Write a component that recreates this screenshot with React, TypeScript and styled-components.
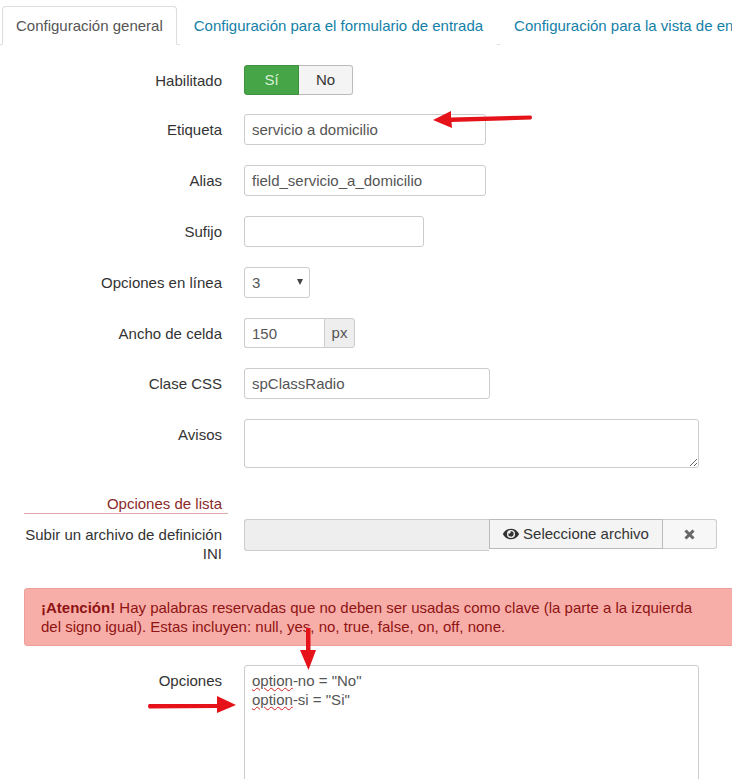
import React, { FC } from "react";
import styled, { createGlobalStyle } from "styled-components";
import { FaEye } from "react-icons/fa";

const GlobalStyle = createGlobalStyle`
  html, body {
    margin: 0;
    padding: 0;
    background: #fff;
    overflow: hidden;
  }
  body {
    font-family: "Liberation Sans", Arial, sans-serif;
    font-size: 15px;
    line-height: 20px;
    color: #333;
  }
`;

const Page = styled.div`
  position: relative;
  width: 732px;
  height: 779px;
  overflow: hidden;
`;

const Tabs = styled.ul`
  display: flex;
  box-sizing: border-box;
  margin: 0;
  padding: 6px 0 0 2px;
  height: 45px;
  list-style: none;
  border-bottom: 1px solid #ddd;
  white-space: nowrap;
`;

const Tab = styled.li<{ $active?: boolean }>`
  flex: none;
  height: 39px;
  box-sizing: border-box;
  padding: 9px 13px 0;
  margin-right: 3px;
  border: 1px solid ${(p) => (p.$active ? "#ddd" : "transparent")};
  border-bottom: ${(p) => (p.$active ? "1px solid #fff" : "none")};
  border-radius: 4px 4px 0 0;
  color: ${(p) => (p.$active ? "#555" : "#1480a8")};
  background: #fff;
`;

const Form = styled.div`
  padding: 20px 0 0 24px;
`;

const Row = styled.div<{ $gap?: number }>`
  display: grid;
  grid-template-columns: 198px 1fr;
  column-gap: 22px;
  margin-bottom: ${(p) => p.$gap ?? 20}px;
`;

const Label = styled.label`
  text-align: right;
  padding-top: 6px;
  line-height: 19px;
  color: #333;
`;

const Toggle = styled.div`
  display: flex;
  width: 109px;
  height: 30px;
`;

const ToggleButton = styled.div<{ $on?: boolean }>`
  box-sizing: border-box;
  height: 30px;
  width: ${(p) => (p.$on ? 55 : 54)}px;
  text-align: center;
  line-height: 28px;
  background: ${(p) => (p.$on ? "#46a546" : "#f4f4f4")};
  color: ${(p) => (p.$on ? "#d8f0d8" : "#333")};
  border: 1px solid ${(p) => (p.$on ? "#3d8f3d" : "#bbb")};
  border-left-width: ${(p) => (p.$on ? 1 : 0)}px;
  border-radius: ${(p) => (p.$on ? "3px 0 0 3px" : "0 3px 3px 0")};
`;

const TextInput = styled.input<{ $width: number }>`
  display: block;
  box-sizing: border-box;
  width: ${(p) => p.$width}px;
  height: 31px;
  padding: 0 7px;
  border: 1px solid #ccc;
  border-radius: 3px;
  font: inherit;
  color: #555;
  background: #fff;
  outline: none;
`;

const SelectWrap = styled.div`
  position: relative;
  width: 66px;
  &::after {
    content: "";
    position: absolute;
    top: 12px;
    right: 7px;
    border-left: 3px solid transparent;
    border-right: 3px solid transparent;
    border-top: 6px solid #444;
  }
`;

const Select = styled.select`
  display: block;
  box-sizing: border-box;
  width: 66px;
  height: 31px;
  padding: 0 7px;
  border: 1px solid #ccc;
  border-radius: 3px;
  font: inherit;
  color: #555;
  background: #fff;
  appearance: none;
`;

const AddOnGroup = styled.div`
  display: flex;
  height: 30px;
`;

const AddOnInput = styled(TextInput)`
  height: 30px;
  border-right: none;
  border-radius: 3px 0 0 3px;
`;

const AddOn = styled.span`
  box-sizing: border-box;
  width: 31px;
  height: 30px;
  line-height: 28px;
  text-align: center;
  background: #eee;
  border: 1px solid #ccc;
  border-radius: 0 3px 3px 0;
  color: #555;
`;

const Area = styled.textarea`
  display: block;
  box-sizing: border-box;
  width: 455px;
  height: 49px;
  border: 1px solid #ccc;
  border-radius: 3px;
  background: #fff;
  outline: none;
`;

const SectionTitle = styled.div`
  box-sizing: border-box;
  width: 204px;
  height: 20px;
  padding-right: 6px;
  margin: 0 0 5px;
  text-align: right;
  line-height: 19px;
  color: #8a2a2a;
  border-bottom: 1px solid #e0a8a8;
`;

const FileGroup = styled.div`
  display: flex;
  align-items: flex-start;
`;

const FileName = styled.div`
  box-sizing: border-box;
  width: 245px;
  height: 32px;
  background: #eee;
  border: 1px solid #ccc;
  border-right: none;
  border-radius: 3px 0 0 3px;
`;

const FileButton = styled.div`
  display: flex;
  align-items: center;
  justify-content: center;
  gap: 4px;
  box-sizing: border-box;
  width: 174px;
  height: 30px;
  background: #f4f4f4;
  border: 1px solid #bbb;
  color: #333;
  svg {
    font-size: 16px;
  }
`;

const ClearButton = styled.div`
  display: flex;
  align-items: center;
  justify-content: center;
  box-sizing: border-box;
  width: 54px;
  height: 30px;
  background: #f7f7f7;
  border: 1px solid #ccc;
  border-left: none;
  border-radius: 0 3px 3px 0;
  color: #666;
`;

const Alert = styled.div`
  box-sizing: border-box;
  width: 760px;
  height: 58px;
  padding: 9px 16px;
  margin: 25px 0 19px;
  background: #f7aea8;
  border: 1px solid #ef9f9a;
  border-radius: 3px;
  color: #8f1313;
  line-height: 19px;
  white-space: nowrap;
`;

const OptionsBox = styled.div`
  box-sizing: border-box;
  width: 455px;
  height: 200px;
  padding: 5px 7px;
  border: 1px solid #ccc;
  border-radius: 3px;
  line-height: 19px;
  color: #555;
`;

const Misspelled = styled.span`
  text-decoration: underline wavy #d02020 1px;
`;

const Annotations = styled.svg`
  position: absolute;
  top: 0;
  left: 0;
  pointer-events: none;
`;

const CancelIcon: FC = () => (
  <svg width="11" height="11" viewBox="0 0 11 11">
    <path d="M1.5 1.5 L9.5 9.5 M9.5 1.5 L1.5 9.5" stroke="currentColor" strokeWidth="3" fill="none" />
  </svg>
);

const App: FC = () => {
  return (
    <Page>
      <GlobalStyle />
      <Tabs>
        <Tab $active>Configuración general</Tab>
        <Tab>Configuración para el formulario de entrada</Tab>
        <Tab>Configuración para la vista de entrada</Tab>
      </Tabs>
      <Form>
        <Row $gap={19}>
          <Label>Habilitado</Label>
          <Toggle>
            <ToggleButton $on>Sí</ToggleButton>
            <ToggleButton>No</ToggleButton>
          </Toggle>
        </Row>
        <Row>
          <Label>Etiqueta</Label>
          <TextInput $width={242} defaultValue="servicio a domicilio" />
        </Row>
        <Row>
          <Label>Alias</Label>
          <TextInput $width={242} defaultValue="field_servicio_a_domicilio" />
        </Row>
        <Row>
          <Label>Sufijo</Label>
          <TextInput $width={180} />
        </Row>
        <Row>
          <Label>Opciones en línea</Label>
          <SelectWrap>
            <Select defaultValue="3">
              <option>3</option>
            </Select>
          </SelectWrap>
        </Row>
        <Row>
          <Label>Ancho de celda</Label>
          <AddOnGroup>
            <AddOnInput $width={80} defaultValue="150" />
            <AddOn>px</AddOn>
          </AddOnGroup>
        </Row>
        <Row>
          <Label>Clase CSS</Label>
          <TextInput $width={246} defaultValue="spClassRadio" />
        </Row>
        <Row $gap={26}>
          <Label>Avisos</Label>
          <Area />
        </Row>
        <SectionTitle>Opciones de lista</SectionTitle>
        <Row $gap={0}>
          <Label>Subir un archivo de definición INI</Label>
          <FileGroup>
            <FileName />
            <FileButton>
              <FaEye />
              Seleccione archivo
            </FileButton>
            <ClearButton>
              <CancelIcon />
            </ClearButton>
          </FileGroup>
        </Row>
        <Alert>
          <strong>¡Atención!</strong> Hay palabras reservadas que no deben ser usadas como clave (la parte a la izquierda
          <br />
          del signo igual). Estas incluyen: null, yes, no, true, false, on, off, none.
        </Alert>
        <Row>
          <Label>Opciones</Label>
          <OptionsBox>
            <Misspelled>option</Misspelled>-no = "No"
            <br />
            <Misspelled>option</Misspelled>-si = "Si"
          </OptionsBox>
        </Row>
      </Form>
      <Annotations width="732" height="779" viewBox="0 0 732 779">
        <g fill="#e5121a" stroke="none">
          <path d="M531 115.5 Q533 117.5 531 119.5 L451.5 122 L452 128 L433 120 L451 111 L451 117.5 Z" />
          <path d="M306 628 L306 650 L300 650 L308.5 670 L316 650 L310.5 650 L310.5 628 Z" />
          <path d="M149 704 L217 704 L217 696 L236 705 L217 713 L217 708 L149 708.5 Q147 706 149 704 Z" />
        </g>
      </Annotations>
    </Page>
  );
};

export default App;
